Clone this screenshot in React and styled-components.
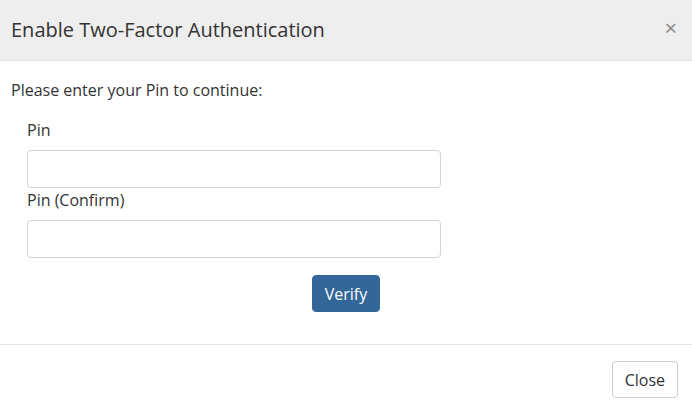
import React from 'react';
import styled, { createGlobalStyle } from 'styled-components';

const Global = createGlobalStyle`
  body {
    margin: 0;
    background: #fff;
    font-family: "Open Sans", "Liberation Sans", sans-serif;
    color: #333;
  }
`;

const Modal = styled.div`
  width: 692px;
  height: 413px;
  display: flex;
  flex-direction: column;
  background: #fff;
`;

const Header = styled.div`
  height: 61px;
  box-sizing: border-box;
  display: flex;
  align-items: center;
  justify-content: space-between;
  padding: 0 15px 0 11px;
  background: #eeeeee;
  border-bottom: 1px solid #e2e2e2;
`;

const Title = styled.h4`
  margin: 0;
  font-size: 20px;
  font-weight: 400;
  color: #333;
  padding-bottom: 2px;
`;

const CloseX = styled.button`
  border: none;
  background: none;
  padding: 0 0 6px;
  font-size: 22px;
  line-height: 1;
  color: #888;
  cursor: pointer;
  font-family: "Open Sans", sans-serif;
`;

const Body = styled.div`
  flex: 1;
  padding: 18px 11px 0;
  border-bottom: 1px solid #e5e5e5;
`;

const Intro = styled.p`
  margin: 0 0 18px;
  font-size: 16px;
  line-height: 22px;
`;

const Form = styled.form`
  width: 414px;
  margin-left: 16px;
  display: flex;
  flex-direction: column;
`;

const Label = styled.label`
  font-size: 16px;
  line-height: 22px;
  margin-bottom: 9px;
`;

const Input = styled.input`
  box-sizing: border-box;
  height: 38px;
  width: 100%;
  border: 1px solid #cfd4da;
  border-radius: 4px;
  margin-bottom: 1px;
  padding: 6px 12px;
  font: inherit;
`;

const Actions = styled.div`
  display: flex;
  justify-content: center;
  padding-top: 16px;
`;

const Button = styled.button`
  box-sizing: border-box;
  height: 37px;
  padding: 0 12px;
  border-radius: 4px;
  font-family: "Open Sans", sans-serif;
  font-size: 16px;
  cursor: pointer;
  background: ${p => (p.$primary ? '#336699' : '#fff')};
  color: ${p => (p.$primary ? '#fff' : '#333')};
  font-weight: ${p => (p.$primary ? 500 : 400)};
  border: 1px solid ${p => (p.$primary ? '#336699' : '#ccc')};
`;

const Footer = styled.div`
  height: 68px;
  display: flex;
  justify-content: flex-end;
  align-items: flex-start;
  padding: 16px 14px 0;
  box-sizing: border-box;
`;

export default function App() {
  return (
    <Modal>
      <Global />
      <Header>
        <Title>Enable Two-Factor Authentication</Title>
        <CloseX aria-label="Close">×</CloseX>
      </Header>
      <Body>
        <Intro>Please enter your Pin to continue:</Intro>
        <Form>
          <Label>Pin</Label>
          <Input type="password" />
          <Label>Pin (Confirm)</Label>
          <Input type="password" />
        </Form>
        <Actions>
          <Button $primary type="button">Verify</Button>
        </Actions>
      </Body>
      <Footer>
        <Button type="button">Close</Button>
      </Footer>
    </Modal>
  );
}
